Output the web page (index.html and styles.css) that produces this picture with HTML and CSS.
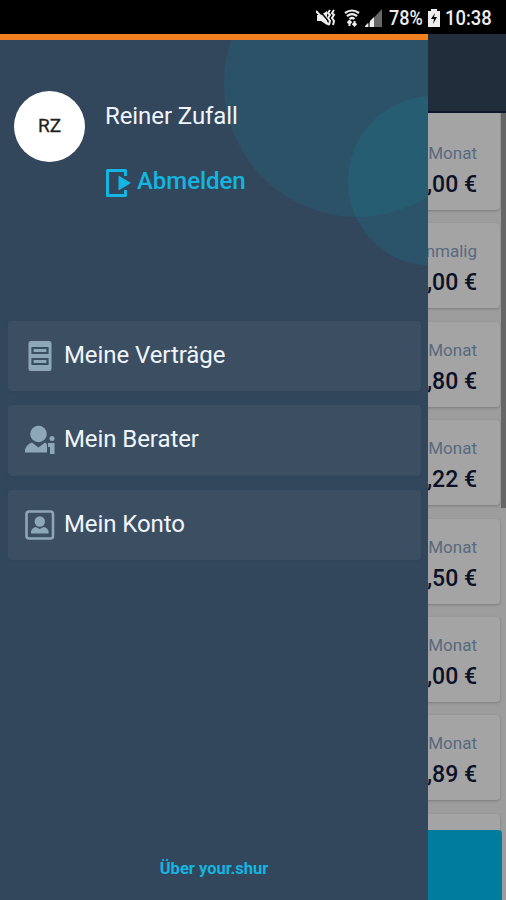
FILE: index.html
```html
<!DOCTYPE html>
<html lang="de">
<head>
<meta charset="utf-8">
<title>your.shur</title>
<link rel="stylesheet" href="styles.css">
</head>
<body>
<div class="status">
  <svg class="mute" width="20" height="18" viewBox="0 0 20 18" fill="none" stroke="#eee"><path d="M1 6h4l6-4v14l-6-4H1z" fill="#eee" stroke="none"/><path d="M2 0l13 15" stroke="#000" stroke-width="1.5"/><path d="M0 2l13 14" stroke-width="2"/><path d="M14 1l-2 3 2 2-2 3 2 3-1 4M18 1l-2 3 2 2-2 3 2 3-1 4" stroke-width="2"/></svg>
  <svg class="wifi" width="16" height="18" viewBox="0 0 16 18" fill="none" stroke="#eee" stroke-width="2.2"><path d="M1 4q7-5 14 0M3 7.200q5-4 10 0M5.500 10q2.500-2 5 0"/><path d="M5.500 17v-5M3.500 14l2-2 2 2M10.500 12v5M8.500 14.500l2 2 2-2" stroke-width="2"/></svg>
  <svg class="signal" width="18" height="18" viewBox="0 0 18 18"><path d="M0 18L17 0v18z" fill="#686868"/><path d="M0 18v-1l3-3v4zM5 18v-6l4-4v10z" fill="#eee"/></svg>
  <span class="percent">78%</span>
  <svg class="battery" width="12" height="18" viewBox="0 0 12 18"><path d="M3 2V0h6v2h3v16H0V2z" fill="#eee"/><path d="M7 4L3 10h3l-1 5 4-7H6z" fill="#000"/></svg>
  <span class="clock">10:38</span>
</div>
<div class="screen">
  <main class="content">
    <div class="appbar"></div>
    <div class="list">
      <article class="card first"><span class="period">Monat</span><span class="price">10,00 €</span></article>
      <article class="card"><span class="period">einmalig</span><span class="price">10,00 €</span></article>
      <article class="card"><span class="period">Monat</span><span class="price">10,80 €</span></article>
      <article class="card"><span class="period">Monat</span><span class="price">10,22 €</span></article>
      <article class="card"><span class="period">Monat</span><span class="price">10,50 €</span></article>
      <article class="card"><span class="period">Monat</span><span class="price">10,00 €</span></article>
      <article class="card"><span class="period">Monat</span><span class="price">10,89 €</span></article>
      <article class="card"></article>
    </div>
    <div class="scrollbar"></div>
    <div class="action"></div>
  </main>
  <aside class="drawer">
    <div class="circle big"></div>
    <div class="circle small"></div>
    <header class="profile">
      <div class="avatar">RZ</div>
      <div class="who">
        <div class="name">Reiner Zufall</div>
        <a class="logout"><svg width="27" height="30" viewBox="0 0 27 30"><path d="M20.500 8V2.500H2.500v25h18V22" fill="none" stroke="#14b5e0" stroke-width="3" stroke-linejoin="round"/><path d="M13.500 7.500v15L26 15z" fill="#14b5e0"/></svg>Abmelden</a>
      </div>
    </header>
    <nav class="menu">
      <a class="item"><svg width="32" height="32" viewBox="0 0 32 32"><rect x="4.500" y="1" width="23" height="30" rx="2.500" fill="#8da6b8"/><path d="M8.500 8h15v5h-15zM8.500 19h15v5h-15z" fill="none" stroke="#3c4f62" stroke-width="2.200"/></svg>Meine Verträge</a>
      <a class="item"><svg width="32" height="32" viewBox="0 0 32 32" fill="#8da6b8"><circle cx="14.500" cy="10" r="8.300"/><path d="M1 28.500v-3Q3 20 8 18.500l6.500 5 6.500-5q2 1 2 3v7z"/><circle cx="28" cy="14.500" r="2.500"/><path d="M24 19h6.500v11H26v-7h-2z"/></svg>Mein Berater</a>
      <a class="item"><svg width="32" height="32" viewBox="0 0 32 32" fill="#8da6b8"><rect x="2.500" y="2.500" width="26.500" height="27" rx="2.500" fill="none" stroke="#8da6b8" stroke-width="2.600"/><circle cx="15.800" cy="12.500" r="5.200"/><path d="M7 24.500v-2q1-4 5-4.500l3.800 2 3.800-2q4 .5 5 4.500v2z"/></svg>Mein Konto</a>
    </nav>
    <a class="about">Über your.shur</a>
  </aside>
</div>
</body>
</html>
```
FILE: styles.css
```css
* { box-sizing: border-box; }
body {
  margin: 0;
  width: 506px;
  height: 900px;
  overflow: hidden;
  display: flex;
  flex-direction: column;
  background: #000;
  font-family: Roboto, "Liberation Sans", sans-serif;
}
.status {
  height: 34px;
  flex: none;
  display: flex;
  align-items: center;
  justify-content: flex-end;
  padding: 2px 15px 0 0;
  color: #eee;
  font-size: 20px;
  font-weight: 500;
}
.mute { margin-right: 8px; }
.wifi { margin-right: 5px; }
.signal { margin-right: 6px; }
.percent { width: 34px; transform: scaleX(.9); transform-origin: left; white-space: nowrap; }
.battery { margin: 0 5px 0 5px; }
.clock { width: 46px; transform: scaleX(.92); transform-origin: left; }
.screen { position: relative; flex: 1; min-height: 0; }
.content {
  position: relative;
  height: 100%;
  overflow: hidden;
  background: #9d9d9d;
}
.appbar { height: 79px; background: #212d3b; border-bottom: 2px solid #10172f; }
.list { display: flex; flex-direction: column; gap: 13.400px; padding-right: 6px; }
.card {
  height: 85px;
  flex: none;
  display: flex;
  flex-direction: column;
  align-items: flex-end;
  padding: 17px 23px 0 0;
  background: #a4a4a4;
  border-radius: 4px;
  box-shadow: 0 1px 3px rgba(0, 0, 0, .22);
}
.card.first { height: 97px; padding-top: 29px; border-radius: 0 0 4px 4px; }
.period { font-size: 17px; line-height: 22px; color: #586a7f; }
.price { margin-top: 8px; font-size: 23px; line-height: 26px; font-weight: 500; color: #0c1128; }
.scrollbar { position: absolute; top: 79px; right: 0; width: 5px; height: 395px; background: #666; }
.action {
  position: absolute;
  left: 4px;
  right: 4px;
  bottom: 0;
  height: 70px;
  border-radius: 4px 4px 0 0;
  background: #007d9e;
}
.drawer {
  position: absolute;
  top: 0;
  left: 0;
  bottom: 0;
  width: 428px;
  display: flex;
  flex-direction: column;
  overflow: hidden;
  background: #32475c;
  border-top: 6.500px solid #f08020;
  color: #f0f5fc;
}
.circle { position: absolute; border-radius: 50%; }
.big { left: 224px; top: -90px; width: 266px; height: 267px; background: rgba(17, 144, 159, .16); }
.small { left: 348px; top: 56px; width: 170px; height: 170px; background: rgba(17, 144, 170, .19); }
.profile {
  position: relative;
  height: 281px;
  flex: none;
  display: flex;
  gap: 20px;
  padding: 51px 0 0 14px;
}
.avatar {
  width: 71px;
  height: 71px;
  display: flex;
  align-items: center;
  justify-content: center;
  border-radius: 50%;
  background: #fff;
  color: #222;
  font-size: 19px;
  padding-bottom: 2px;
  -webkit-text-stroke: .3px #222;
}
.who { padding-top: 9px; }
.name { font-size: 24px; line-height: 32px; letter-spacing: -.08px; }
.logout { display: flex; align-items: center; gap: 5px; height: 32px; margin-top: 33px; color: #14b5e0; font-size: 24px; font-weight: 500; letter-spacing: -.05px; }
.logout svg { position: relative; top: 2px; }
.menu { position: relative; display: flex; flex-direction: column; gap: 14px; padding: 0 7px 0 8px; }
.item {
  height: 70.300px;
  display: flex;
  align-items: center;
  gap: 8px;
  padding: 0 0 2px 16px;
  border-radius: 4px;
  background: #3c4f62;
  box-shadow: 0 1px 3px rgba(20, 40, 60, .08);
  font-size: 24px;
  letter-spacing: -.08px;
}
.item svg { position: relative; top: 1px; }
.about { margin-top: auto; padding-bottom: 20px; text-align: center; color: #14b5e0; font-size: 16.500px; line-height: 22px; font-weight: 700; }
```
